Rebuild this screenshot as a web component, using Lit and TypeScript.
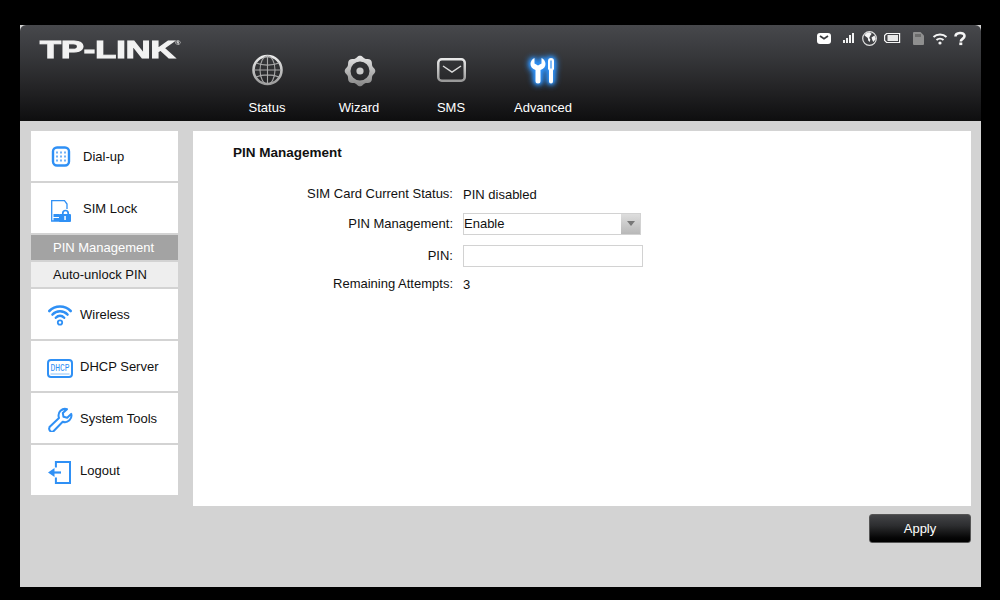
import { LitElement, html, css, svg } from "lit";
import { customElement } from "lit/decorators.js";

const B = "#2f90f5";

function gearPath(cx: number, cy: number, base: number, amp: number, lobes: number) {
  const pts: string[] = [];
  for (let i = 0; i < 96; i++) {
    const t = (i / 96) * Math.PI * 2;
    const r = base + amp * Math.cos(lobes * t);
    pts.push(`${(cx + r * Math.sin(t)).toFixed(2)} ${(cy - r * Math.cos(t)).toFixed(2)}`);
  }
  return `M${pts.join("L")}z`;
}

const navIcons: Record<string, unknown> = {
  status: svg`<svg width="34" height="34" viewBox="0 0 34 34" fill="none">
    <defs><linearGradient id="g1" x1="0" y1="0" x2="0" y2="1"><stop offset="0" stop-color="#ececec"/><stop offset="1" stop-color="#9a9a9a"/></linearGradient></defs>
    <circle cx="17.500" cy="17" r="14" stroke="url(#g1)" stroke-width="2.600"/>
    <g stroke="#a8a8a8" stroke-width="1.100">
      <ellipse cx="17.500" cy="17" rx="7.500" ry="14"/>
      <path d="M17.500 3v28M4 17h27M6 10c6 2.800 17 2.800 23 0M6 24c6-2.800 17-2.800 23 0"/>
    </g></svg>`,
  wizard: svg`<svg width="34" height="34" viewBox="0 0 34 34">
    <defs><linearGradient id="g2" x1="0" y1="0" x2="0" y2="1"><stop offset="0" stop-color="#e8e8e8"/><stop offset="1" stop-color="#858585"/></linearGradient></defs>
    <path fill="url(#g2)" fill-rule="evenodd" d="${gearPath(18, 18, 14.300, 1, 8)}M18 8.500a9.500 9.500 0 1 0 0 19 9.500 9.500 0 0 0 0-19z"/>
    <circle cx="18" cy="18" r="3.600" fill="#c8c8c8"/></svg>`,
  sms: svg`<svg width="34" height="34" viewBox="0 0 34 34" fill="none">
    <defs><linearGradient id="g3" x1="0" y1="0" x2="0" y2="1"><stop offset="0" stop-color="#e8e8e8"/><stop offset="1" stop-color="#999"/></linearGradient></defs>
    <rect x="4.250" y="6.250" width="26.500" height="21.500" rx="3.500" stroke="url(#g3)" stroke-width="2.500"/>
    <path d="M9 13l9 6 9-6" stroke="#dcdcdc" stroke-width="1.500"/></svg>`,
  advanced: svg`<svg class="glow" width="34" height="34" viewBox="0 0 34 34" fill="#fff">
    <path d="M8.500 5v5.500l3.500 2 3.500-2V5c2.500 1 4 3.500 4 6 0 3-2 5-5 6v11a2.500 2.500 0 0 1-5 0V17c-3-1-5-3-5-6 0-2.500 1.500-5 4-6z"/>
    <path fill-rule="evenodd" d="M22 8a3 3 0 0 1 6 0v8l-1 1.500V28.500a2 2 0 0 1-4 0V17.500L22 16zM24.400 7.500v8h1.200v-8z"/></svg>`,
};

const sideIcons: Record<string, unknown> = {
  dial: svg`<svg width="20" height="22" viewBox="0 0 20 22" fill="none">
    <rect x="2" y="2.500" width="16" height="18" rx="4" stroke="${B}" stroke-width="2.400"/>
    <g fill="#72b2f7">${[6, 10, 14].flatMap((x) => [7.500, 11.500, 15.500].map((y) => svg`<rect x="${x - 1}" y="${y - 1}" width="2" height="2"/>`))}</g></svg>`,
  sim: svg`<svg width="24" height="28" viewBox="0 0 24 28" fill="none">
    <path d="M11 27H2.700V6.700H15.500L18 10V15" stroke="${B}" stroke-width="1.300"/>
    <rect x="4.500" y="20" width="6" height="3" fill="${B}"/><rect x="4.500" y="24" width="6" height="3" fill="${B}"/>
    <path d="M13.800 21v-1.800a2.700 2.700 0 0 1 5.400 0V21" stroke="${B}" stroke-width="1.700"/>
    <rect x="10" y="20" width="12" height="8" rx="1" fill="${B}"/>
    <rect x="15.300" y="22" width="1.500" height="4" fill="#fff"/></svg>`,
  wifi: svg`<svg width="26" height="24" viewBox="0 0 26 24" fill="none" stroke="${B}" stroke-linecap="round">
    <path d="M2.300 9C5.200 6 8.900 4.500 13 4.500s7.800 1.500 10.700 4.500" stroke-width="2.600"/>
    <path d="M5.500 12.500C7.500 10.300 10 9.200 13 9.200s5.500 1.100 7.500 3.300" stroke-width="2.600"/>
    <path d="M8.800 15.800C10 14.500 11.400 13.800 13 13.800s3 .7 4.200 2" stroke-width="2.400"/>
    <circle cx="13" cy="20.500" r="2.200" stroke-width="1.800"/></svg>`,
  dhcp: svg`<svg width="26" height="24" viewBox="0 0 26 24" fill="none">
    <rect x="1" y="6" width="24" height="17" rx="3" stroke="${B}" stroke-width="2"/>
    <text transform="translate(3.400 17) scale(1 1.250)" class="dh">DHCP</text>
    <path d="M3.500 20h19" stroke="#8cc2f8" stroke-width="1"/></svg>`,
  tool: svg`<svg width="26" height="28" viewBox="0 -2 26 28" fill="none">
    <path d="M2.500 21L12 12c-1-3-.3-5.500 1.500-7.200C15.300 3.100 17.700 2.500 20 3.200l-4.200 3.800.7 3.800 3.700 1 4-3.900c.7 2.400 0 4.700-1.800 6.400-1.800 1.700-4.300 2.300-6.700 1.400l-9 9.300c-1 1-2.500 1-3.500 0s-1.200-2.600-.7-3.500z" stroke="${B}" stroke-width="2" stroke-linejoin="round"/></svg>`,
  logout: svg`<svg width="24" height="28" viewBox="0 -4.500 24 28" fill="none">
    <path d="M8.900 7V1.500H23v21H8.900V17" stroke="${B}" stroke-width="2"/>
    <path d="M14 12H6" stroke="${B}" stroke-width="2.200"/>
    <path d="M1 12l6.500-4.500v9z" fill="${B}"/></svg>`,
};

@customElement("app-root")
export class AppRoot extends LitElement {
  static styles = css`
    :host { display: block; width: 1000px; height: 600px; background: #000; padding: 25px 19px 13px 20px; box-sizing: border-box; font-family: "Liberation Sans", Arial, sans-serif; font-size: 13px; color: #111; }
    .shell { height: 100%; display: flex; flex-direction: column; background: #d3d3d3; }
    .head { height: 96px; flex: none; display: flex; border-radius: 6px 6px 0 0; background: linear-gradient(#47484c 0%, #38393c 30%, #242426 65%, #0e0e0f 100%); box-sizing: border-box; position: relative; }
    .logoBox { width: 201px; flex: none; padding: 15px 0 0 20px; box-sizing: border-box; }
    .logo { display: flex; align-items: flex-start; color: #f2f2f2; font-weight: 700; font-size: 24px; line-height: 20px; transform: scaleX(1.43); transform-origin: 0 0; -webkit-text-stroke: 1.100px #f2f2f2; white-space: nowrap; }
    .logo sup { font-size: 5px; line-height: 6px; -webkit-text-stroke: 0; }
    nav { display: flex; }
    .nav { width: 92px; display: flex; flex-direction: column; align-items: center; color: #fff; padding-top: 28px; box-sizing: border-box; }
    .nav svg { display: block; height: 34px; }
    .nav .glow { filter: drop-shadow(0 0 2px #2f90f5) drop-shadow(0 0 3px #2f90f5) drop-shadow(0 0 1px #2f90f5); }
    .nav span { margin-top: 13px; line-height: 16px; }
    .tray { position: absolute; right: 14px; top: 5px; display: flex; align-items: center; height: 16px; }
    .tray svg { display: block; }
    .body { flex: 1; display: grid; grid-template-columns: 147px 778px; column-gap: 15px; padding: 10px 0 0 11px; align-content: start; }
    .side { display: flex; flex-direction: column; gap: 2px; }
    .item { height: 50px; background: #fff; display: flex; align-items: center; box-sizing: border-box; line-height: 16px; }
    .item span { position: relative; top: 1px; }
    .ic { flex: none; display: flex; box-sizing: border-box; }
    .ic svg { display: block; }
    .ic.first { width: 52px; padding-left: 20px; }
    .ic.sim { width: 52px; padding-left: 18px; }
    .ic.wide { width: 49px; padding-left: 16px; }
    .sub { height: 25px; display: flex; align-items: center; padding-left: 22px; background: #eee; }
    .sub.on { background: #a3a3a3; color: #fff; }
    .panel { height: 375px; background: #fff; box-sizing: border-box; padding: 14px 0 0 40px; }
    h1 { margin: 0; font-size: 13.500px; font-weight: 700; line-height: 16px; }
    .form { display: grid; grid-template-columns: 220px 180px; column-gap: 10px; grid-template-rows: 30px 29px 36px 20px; margin-top: 18px; align-items: center; }
    label { text-align: right; line-height: 16px; }
    .select { width: 178px; height: 22px; box-sizing: border-box; border: 1px solid #d2d2d2; display: flex; align-items: center; justify-content: space-between; }
    .arrow { width: 19px; height: 20px; background: linear-gradient(#dedede, #b8b8b8); display: flex; align-items: center; justify-content: center; }
    .arrow i { border: 4px solid transparent; border-top: 5px solid #777; border-bottom: 0; }
    .input { width: 180px; height: 22px; box-sizing: border-box; border: 1px solid #d2d2d2; background: #fff; }
    .foot { grid-column: 2; display: flex; justify-content: flex-end; margin-top: 8px; }
    .apply { width: 102px; height: 29px; box-sizing: border-box; border: 1px solid #555; border-radius: 3px; background: linear-gradient(#434447 0%, #2c2d2f 40%, #050505 85%, #000 100%); color: #fff; display: flex; align-items: center; justify-content: center; }
    .dh { font-family: "Liberation Mono", monospace; font-size: 8px; fill: #2f90f5; }
  `;

  private side(icon: string, label: string, cls = "wide") {
    return html`<div class="item"><div class="ic ${cls}">${sideIcons[icon]}</div><span>${label}</span></div>`;
  }

  render() {
    return html`<div class="shell">
      <header class="head">
        <div class="logoBox"><div class="logo">TP-LINK<sup>®</sup></div></div>
        <nav>
          ${[["status", "Status"], ["wizard", "Wizard"], ["sms", "SMS"], ["advanced", "Advanced"]].map(
            ([k, t]) => html`<div class="nav">${navIcons[k]}<span>${t}</span></div>`
          )}
        </nav>
        <div class="tray">
          <svg width="150" height="16" viewBox="0 0 150 16">
            <rect x="0" y="3" width="14" height="11" rx="3" fill="#fff"/>
            <path d="M3 6l4 2.800 4-2.800" stroke="#3a3b3e" stroke-width="1.700" fill="none"/>
            <g fill="#f2f2f2"><rect x="26" y="10" width="2" height="3"/><rect x="29" y="8" width="2" height="5"/><rect x="32" y="5" width="2" height="8"/><rect x="35" y="3" width="2" height="10"/></g>
            <circle cx="52.500" cy="8.500" r="6.800" fill="none" stroke="#e0e0e0" stroke-width="1.200"/>
            <path d="M47.500 5.500c1-2 3-3.200 5-3.200l2.200 1.500-1.500 2-1 2.200 1.200 1.500-.7 2.500-1.500-1.500-.4-2.500zM54.500 7.500l3-2 1.300 3.500-2.500 3-1-2z" fill="#f5f5f5"/>
            <path d="M67.600 5.500l2-2h13v9h-13l-2-2z" fill="none" stroke="#f5f5f5" stroke-width="1.200"/>
            <rect x="70.500" y="5" width="10.500" height="6" fill="#e8e8e8"/>
            <path d="M97 2h6.500l3.500 3.500V14a1 1 0 0 1-1 1H97a1 1 0 0 1-1-1V3a1 1 0 0 1 1-1z" fill="#8f8f8f"/>
            <g fill="#4a4a4a"><rect x="98.500" y="4" width="1" height="3"/><rect x="100.500" y="4" width="1" height="3"/><rect x="102.500" y="4" width="1" height="3"/></g>
            <g fill="none" stroke="#f5f5f5" stroke-width="2"><path d="M116.500 7c3.500-3.200 9.500-3.200 13 0"/><path d="M119.500 10c2-1.800 5-1.800 7 0"/></g>
            <circle cx="123" cy="13" r="1.600" fill="#f5f5f5"/>
            <path d="M138.500 6.500c0-4.500 9-4.800 9-.5 0 3-3.700 2.700-3.700 5.500" fill="none" stroke="#f5f5f5" stroke-width="2.600"/>
            <rect x="142.300" y="12.500" width="3" height="2.600" fill="#f5f5f5"/>
          </svg>
        </div>
      </header>
      <div class="body">
        <aside class="side">
          ${this.side("dial", "Dial-up", "first")}
          ${this.side("sim", "SIM Lock", "sim")}
          <div class="sub on">PIN Management</div>
          <div class="sub">Auto-unlock PIN</div>
          ${this.side("wifi", "Wireless")}
          ${this.side("dhcp", "DHCP Server")}
          ${this.side("tool", "System Tools")}
          ${this.side("logout", "Logout")}
        </aside>
        <main class="panel">
          <h1>PIN Management</h1>
          <div class="form">
            <label>SIM Card Current Status:</label><span>PIN disabled</span>
            <label>PIN Management:</label>
            <div class="select"><span>Enable</span><div class="arrow"><i></i></div></div>
            <label>PIN:</label><div class="input"></div>
            <label>Remaining Attempts:</label><span>3</span>
          </div>
        </main>
        <div class="foot"><div class="apply">Apply</div></div>
      </div>
    </div>`;
  }
}
